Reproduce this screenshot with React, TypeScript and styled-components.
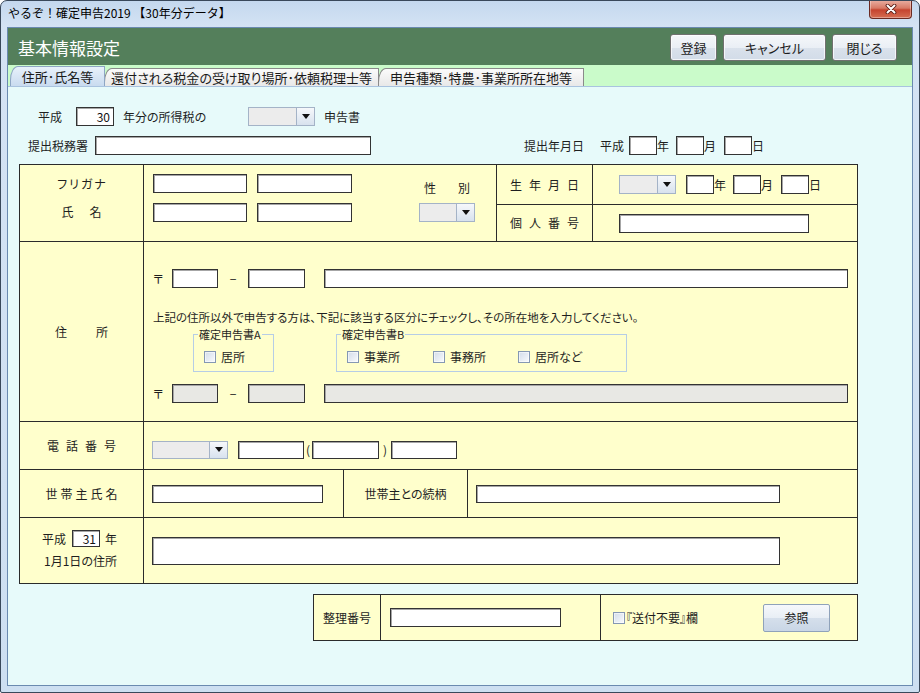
import React from "react";
import styled, { createGlobalStyle } from "styled-components";

const FONT = `"Noto Sans CJK JP", "Noto Sans", sans-serif`;

const GlobalStyle = createGlobalStyle`
  html, body { margin: 0; padding: 0; background: #fff; }
  body { font-family: ${FONT}; font-size: 12px; color: #1e1e1e; font-feature-settings: "palt"; }
  * { box-sizing: border-box; }
`;

const Window = styled.div`
  width: 920px;
  height: 693px;
  display: flex;
  flex-direction: column;
  border: 1px solid #39485a;
  border-radius: 7px 7px 2px 2px;
  background: linear-gradient(180deg, #c4d8ee 0px, #d4e3f4 26px, #cddff1 100%);
  padding: 0 6px 6px 6px;
  overflow: hidden;
`;

const TitleBar = styled.div`
  height: 26px;
  flex-shrink: 0;
  display: flex;
  align-items: flex-start;
  justify-content: space-between;
`;

const TitleText = styled.div`
  padding: 5px 0 0 1px;
  font-size: 12px;
  line-height: 14px;
  color: #000;
  font-feature-settings: normal;
`;

const CloseBtn = styled.div`
  width: 43px;
  height: 19px;
  margin-top: -1px;
  margin-right: 1px;
  border: 1px solid #6b2a22;
  border-top: none;
  border-radius: 0 0 4px 4px;
  background: linear-gradient(180deg, #eab0a3 0%, #d87a66 45%, #c5442f 55%, #d56e52 100%);
  box-shadow: inset 0 0 0 1px rgba(255, 255, 255, 0.35);
  display: flex;
  align-items: center;
  justify-content: center;
`;

const Client = styled.div`
  flex: 1;
  min-height: 0;
  display: flex;
  flex-direction: column;
  border: 1px solid #6a8ab0;
`;

const Header = styled.div`
  height: 37px;
  flex-shrink: 0;
  background: #547f5b;
  display: flex;
  align-items: flex-start;
  padding: 6px 15px 0 10px;
`;

const HeaderTitle = styled.h1`
  flex: 1;
  margin: 3px 0 0 0;
  font-size: 17px;
  font-weight: 400;
  line-height: 21px;
  color: #fff;
`;

const ButtonGroup = styled.div`
  display: flex;
  gap: 6px;
`;

const HeadBtn = styled.button<{ $w: number }>`
  width: ${(p) => p.$w}px;
  height: 27px;
  padding: 0;
  border: 1px solid #707070;
  border-radius: 3px;
  background: linear-gradient(180deg, #f5f7fa 0%, #eaeff5 50%, #dae2ec 51%, #d2dce8 100%);
  box-shadow: inset 0 0 0 1px rgba(255, 255, 255, 0.7);
  font: 13px/1 ${FONT};
  font-feature-settings: "palt";
  color: #1c1c1c;
`;

const TabStrip = styled.div`
  height: 21px;
  flex-shrink: 0;
  background: #cafbca;
  display: flex;
  align-items: flex-end;
  padding-left: 2px;
`;

const Tab = styled.div<{ $w: number; $active?: boolean }>`
  width: ${(p) => p.$w}px;
  height: ${(p) => (p.$active ? 20 : 18)}px;
  margin-right: -1px;
  border: 1px solid ${(p) => (p.$active ? "#8ea6c4" : "#8a8a8a")};
  border-bottom: none;
  border-top-left-radius: 8px 14px;
  background: ${(p) =>
    p.$active
      ? "linear-gradient(180deg, #e8f1fb, #c9dbef)"
      : "linear-gradient(180deg, #fbfbfb, #e8e8e8)"};
  display: flex;
  align-items: center;
  justify-content: center;
  font-size: 13px;
  line-height: 16px;
  white-space: nowrap;
  color: #1a1a1a;
  position: relative;
  z-index: ${(p) => (p.$active ? 1 : 0)};
`;

const Content = styled.div`
  flex: 1;
  min-height: 0;
  background: #e7fafa;
  border-top: 1px solid #a9c3df;
  padding-top: 20px;
  display: flex;
  flex-direction: column;
`;

const Line = styled.div<{ $pl?: number; $mt?: number; $h?: number }>`
  display: flex;
  align-items: center;
  height: ${(p) => p.$h ?? 19}px;
  padding-left: ${(p) => p.$pl ?? 0}px;
  margin-top: ${(p) => p.$mt ?? 0}px;
  flex-shrink: 0;
`;

const Txt = styled.span<{ $w?: number; $ml?: number; $mt?: number; $center?: boolean }>`
  flex-shrink: 0;
  width: ${(p) => (p.$w ? `${p.$w}px` : "auto")};
  margin-left: ${(p) => p.$ml ?? 0}px;
  margin-top: ${(p) => p.$mt ?? 0}px;
  text-align: ${(p) => (p.$center ? "center" : "left")};
  font-size: 12px;
  line-height: 14px;
  white-space: nowrap;
`;

const Input = styled.input.attrs({ readOnly: true, type: "text" })<{
  $w: number;
  $h?: number;
  $ml?: number;
  $off?: boolean;
}>`
  flex-shrink: 0;
  width: ${(p) => p.$w}px;
  height: ${(p) => p.$h ?? 19}px;
  margin: 0 0 0 ${(p) => p.$ml ?? 0}px;
  padding: 0 3px;
  border: 1px solid #333;
  box-shadow: inset 1px 1px 0 #a6a6a6;
  border-radius: 0;
  background: ${(p) => (p.$off ? "#e8e8e4" : "#fff")};
  font: 12px/1 ${FONT};
  text-align: right;
  color: #111;
  outline: none;
`;

const Combo = styled.div<{ $w: number; $h?: number; $ml?: number }>`
  flex-shrink: 0;
  width: ${(p) => p.$w}px;
  height: ${(p) => p.$h ?? 19}px;
  margin-left: ${(p) => p.$ml ?? 0}px;
  display: flex;
  border: 1px solid #a4b3c7;
  background: #ececec;
`;

const ComboBtn = styled.div`
  margin-left: auto;
  width: 18px;
  height: 100%;
  border-left: 1px solid #a4b3c7;
  background: linear-gradient(180deg, #f6f8fb, #d8e2ee);
  display: flex;
  align-items: center;
  justify-content: center;
  &::after {
    content: "";
    border-left: 4px solid transparent;
    border-right: 4px solid transparent;
    border-top: 5px solid #111;
  }
`;

const Table = styled.div`
  display: grid;
  width: 839px;
  margin: 9px 0 0 11px;
  grid-template-columns: 123px 352px 95px 264px;
  grid-template-rows: 39px 36px 179px 47px 47px 65px;
  gap: 1px;
  padding: 1px;
  background: #2b2b2b;
  flex-shrink: 0;
`;

const Cell = styled.div<{ $col: string; $row: string }>`
  grid-column: ${(p) => p.$col};
  grid-row: ${(p) => p.$row};
  background: #ffffcc;
  min-width: 0;
`;

const LabelCell = styled(Cell)`
  display: flex;
  align-items: center;
  justify-content: center;
  font-size: 12px;
  line-height: 14px;
`;

const StackLabel = styled(Cell)`
  display: flex;
  flex-direction: column;
  align-items: center;
  padding-top: 12px;
  gap: 14px;
  font-size: 12px;
  line-height: 14px;
`;

const SpacedRow = styled.span<{ $gap: number }>`
  display: inline-flex;
  gap: ${(p) => p.$gap}px;
  line-height: 14px;
`;

const Spaced = ({ text, gap }: { text: string; gap: number }) => (
  <SpacedRow $gap={gap}>
    {[...text].map((c, i) => (
      <span key={i}>{c}</span>
    ))}
  </SpacedRow>
);

const NameCell = styled(Cell)`
  display: flex;
  align-items: flex-start;
  padding: 9px 0 0 9px;
`;

const NameGrid = styled.div`
  display: grid;
  grid-template-columns: 94px 95px;
  grid-auto-rows: 19px;
  gap: 10px;
`;

const SexCol = styled.div`
  width: 56px;
  margin-left: 67px;
  padding-top: 7px;
  display: flex;
  flex-direction: column;
  align-items: center;
  gap: 8px;
`;

const RowCell = styled(Cell)<{ $pl?: number; $pt?: number }>`
  display: flex;
  align-items: center;
  padding-left: ${(p) => p.$pl ?? 0}px;
  padding-top: ${(p) => p.$pt ?? 0}px;
`;

const AddrCell = styled(Cell)`
  display: flex;
  flex-direction: column;
  padding: 27px 0 0 9px;
`;

const Notice = styled.p`
  margin: 23px 0 0 0;
  font-size: 11.5px;
  line-height: 12px;
  white-space: nowrap;
`;

const GroupRow = styled.div`
  display: flex;
  margin-top: 5px;
`;

const Group = styled.fieldset<{ $w: number; $ml: number }>`
  width: ${(p) => p.$w}px;
  height: 44px;
  margin: 0 0 0 ${(p) => p.$ml}px;
  padding: 0 0 0 10px;
  min-width: 0;
  border: 1px solid #b6cde6;
  display: flex;
  align-items: flex-start;
`;

const GroupTitle = styled.legend`
  margin-left: -6px;
  padding: 0 1px;
  font-size: 11px;
  line-height: 12px;
  white-space: nowrap;
`;

const CheckItem = styled.label<{ $w?: number; $gap?: number; $mt?: number }>`
  display: flex;
  align-items: center;
  gap: ${(p) => p.$gap ?? 5}px;
  width: ${(p) => (p.$w ? `${p.$w}px` : "auto")};
  margin-top: ${(p) => p.$mt ?? 0}px;
  font-size: 12px;
  line-height: 14px;
  white-space: nowrap;
  flex-shrink: 0;
`;

const Box = styled.span`
  width: 12px;
  height: 12px;
  flex-shrink: 0;
  border: 1px solid #8598b3;
  background: linear-gradient(135deg, #d3dce9 0%, #e9eef5 60%, #fafbfd 100%);
  box-shadow: inset 0 0 0 1px rgba(255, 255, 255, 0.55);
`;

const HeadCell = styled(Cell)`
  display: flex;
`;

const HeadPart = styled.div<{ $w?: number; $label?: boolean }>`
  display: flex;
  align-items: center;
  justify-content: ${(p) => (p.$label ? "center" : "flex-start")};
  width: ${(p) => (p.$w ? `${p.$w}px` : "auto")};
  flex: ${(p) => (p.$w ? "0 0 auto" : "1")};
  padding-left: ${(p) => (p.$label ? 0 : 8)}px;
  border-left: ${(p) => (p.$label ? "1px solid #2b2b2b" : "none")};
  border-right: ${(p) => (p.$label ? "1px solid #2b2b2b" : "none")};
  font-size: 12px;
  line-height: 14px;
`;

const Jan1Label = styled(Cell)`
  display: flex;
  flex-direction: column;
  align-items: flex-start;
  padding: 12px 0 0 22px;
`;

const SubTable = styled.div`
  display: grid;
  width: 545px;
  height: 47px;
  margin: 10px 0 0 305px;
  grid-template-columns: 66px 219px 256px;
  gap: 1px;
  padding: 1px;
  background: #2b2b2b;
  flex-shrink: 0;
`;

const SubCell = styled.div<{ $pl?: number; $center?: boolean }>`
  background: #ffffcc;
  display: flex;
  align-items: center;
  justify-content: ${(p) => (p.$center ? "center" : "flex-start")};
  padding-left: ${(p) => p.$pl ?? 0}px;
  font-size: 12px;
  line-height: 14px;
`;

const RefCell = styled(SubCell)`
  padding: 0 27px 0 12px;
  justify-content: space-between;
`;

const RefBtn = styled.button`
  width: 67px;
  height: 28px;
  padding: 0;
  border: 1px solid #8fa2ba;
  border-radius: 2px;
  background: linear-gradient(180deg, #f6f8fb 0%, #e8eef5 50%, #d5dfeb 51%, #c9d6e6 100%);
  font: 12px/1 ${FONT};
  color: #1c1c1c;
`;

const CloseIcon = () => (
  <svg width="12" height="10" viewBox="0 0 12 10">
    <path d="M2.5 1.5 L9.5 8.5 M9.5 1.5 L2.5 8.5" stroke="#5a1c14" strokeWidth="3.8" strokeLinecap="round" />
    <path d="M2.5 1.5 L9.5 8.5 M9.5 1.5 L2.5 8.5" stroke="#fff" strokeWidth="2" strokeLinecap="round" />
  </svg>
);

const Check = ({ label, w, gap, mt }: { label: string; w?: number; gap?: number; mt?: number }) => (
  <CheckItem $w={w} $gap={gap} $mt={mt}>
    <Box />
    {label}
  </CheckItem>
);

const PostLine = ({ off, mt }: { off?: boolean; mt?: number }) => (
  <Line $mt={mt}>
    <Txt $w={19}>〒</Txt>
    <Input $w={46} $off={off} />
    <Txt $w={30} $center>
      −
    </Txt>
    <Input $w={57} $off={off} />
    <Input $w={524} $ml={19} $off={off} />
  </Line>
);

export default function App() {
  return (
    <>
      <GlobalStyle />
      <Window>
        <TitleBar>
          <TitleText>やるぞ！確定申告2019 【30年分データ】</TitleText>
          <CloseBtn>
            <CloseIcon />
          </CloseBtn>
        </TitleBar>
        <Client>
          <Header>
            <HeaderTitle>基本情報設定</HeaderTitle>
            <ButtonGroup>
              <HeadBtn $w={47}>登録</HeadBtn>
              <HeadBtn $w={103}>キャンセル</HeadBtn>
              <HeadBtn $w={65}>閉じる</HeadBtn>
            </ButtonGroup>
          </Header>
          <TabStrip>
            <Tab $w={95} $active>
              住所･氏名等
            </Tab>
            <Tab $w={275}>還付される税金の受け取り場所･依頼税理士等</Tab>
            <Tab $w={206}>申告種類･特農･事業所所在地等</Tab>
          </TabStrip>
          <Content>
            <Line $pl={30}>
              <Txt $w={38}>平成</Txt>
              <Input $w={38} defaultValue="30" />
              <Txt $w={125} $ml={9}>
                年分の所得税の
              </Txt>
              <Combo $w={67}>
                <ComboBtn />
              </Combo>
              <Txt $ml={9}>申告書</Txt>
            </Line>
            <Line $pl={20} $mt={10}>
              <Txt $w={67}>提出税務署</Txt>
              <Input $w={276} />
              <Txt $w={76} $ml={153}>
                提出年月日
              </Txt>
              <Txt $w={29}>平成</Txt>
              <Input $w={28} />
              <Txt $w={19}>年</Txt>
              <Input $w={28} />
              <Txt $w={20}>月</Txt>
              <Input $w={28} />
              <Txt>日</Txt>
            </Line>

            <Table>
              <StackLabel $col="1" $row="1 / 3">
                <Spaced text="フリガナ" gap={2} />
                <Spaced text="氏名" gap={16} />
              </StackLabel>
              <NameCell $col="2" $row="1 / 3">
                <NameGrid>
                  <Input $w={94} />
                  <Input $w={95} />
                  <Input $w={94} />
                  <Input $w={95} />
                </NameGrid>
                <SexCol>
                  <Spaced text="性別" gap={22} />
                  <Combo $w={56}>
                    <ComboBtn />
                  </Combo>
                </SexCol>
              </NameCell>
              <LabelCell $col="3" $row="1">
                <Spaced text="生年月日" gap={7} />
              </LabelCell>
              <RowCell $col="4" $row="1" $pl={26}>
                <Combo $w={57}>
                  <ComboBtn />
                </Combo>
                <Input $w={28} $ml={10} />
                <Txt $w={19}>年</Txt>
                <Input $w={28} />
                <Txt $w={20}>月</Txt>
                <Input $w={28} />
                <Txt>日</Txt>
              </RowCell>
              <LabelCell $col="3" $row="2">
                <Spaced text="個人番号" gap={7} />
              </LabelCell>
              <RowCell $col="4" $row="2" $pl={26}>
                <Input $w={190} />
              </RowCell>

              <LabelCell $col="1" $row="3">
                <Spaced text="住所" gap={29} />
              </LabelCell>
              <AddrCell $col="2 / 5" $row="3">
                <PostLine />
                <Notice>上記の住所以外で申告する方は、下記に該当する区分にチェックし、その所在地を入力してください。</Notice>
                <GroupRow>
                  <Group $w={81} $ml={40}>
                    <GroupTitle>確定申告書A</GroupTitle>
                    <Check label="居所" mt={10} />
                  </Group>
                  <Group $w={291} $ml={62}>
                    <GroupTitle>確定申告書B</GroupTitle>
                    <Check label="事業所" w={86} mt={10} />
                    <Check label="事務所" w={85} mt={10} />
                    <Check label="居所など" mt={10} />
                  </Group>
                </GroupRow>
                <PostLine off mt={12} />
              </AddrCell>

              <LabelCell $col="1" $row="4">
                <Spaced text="電話番号" gap={7} />
              </LabelCell>
              <RowCell $col="2 / 5" $row="4" $pl={8} $pt={8}>
                <Combo $w={76} $h={18}>
                  <ComboBtn />
                </Combo>
                <Input $w={66} $h={18} $ml={10} />
                <Txt $w={8} $center>
                  (
                </Txt>
                <Input $w={67} $h={18} />
                <Txt $w={12} $center>
                  )
                </Txt>
                <Input $w={66} $h={18} />
              </RowCell>

              <LabelCell $col="1" $row="5">
                <Spaced text="世帯主氏名" gap={3} />
              </LabelCell>
              <HeadCell $col="2 / 5" $row="5">
                <HeadPart $w={199}>
                  <Input $w={171} $h={18} />
                </HeadPart>
                <HeadPart $w={125} $label>
                  世帯主との続柄
                </HeadPart>
                <HeadPart>
                  <Input $w={304} $h={18} />
                </HeadPart>
              </HeadCell>

              <Jan1Label $col="1" $row="6">
                <Line $h={17}>
                  <Txt>平成</Txt>
                  <Input $w={28} $h={17} $ml={6} defaultValue="31" />
                  <Txt $ml={5}>年</Txt>
                </Line>
                <Txt $ml={2} $mt={7}>
                  1月1日の住所
                </Txt>
              </Jan1Label>
              <RowCell $col="2 / 5" $row="6" $pl={8}>
                <Input $w={628} $h={28} />
              </RowCell>
            </Table>

            <SubTable>
              <SubCell $center>整理番号</SubCell>
              <SubCell $pl={9}>
                <Input $w={171} />
              </SubCell>
              <RefCell>
                <Check label="『送付不要』欄" gap={1} />
                <RefBtn>参照</RefBtn>
              </RefCell>
            </SubTable>
          </Content>
        </Client>
      </Window>
    </>
  );
}
